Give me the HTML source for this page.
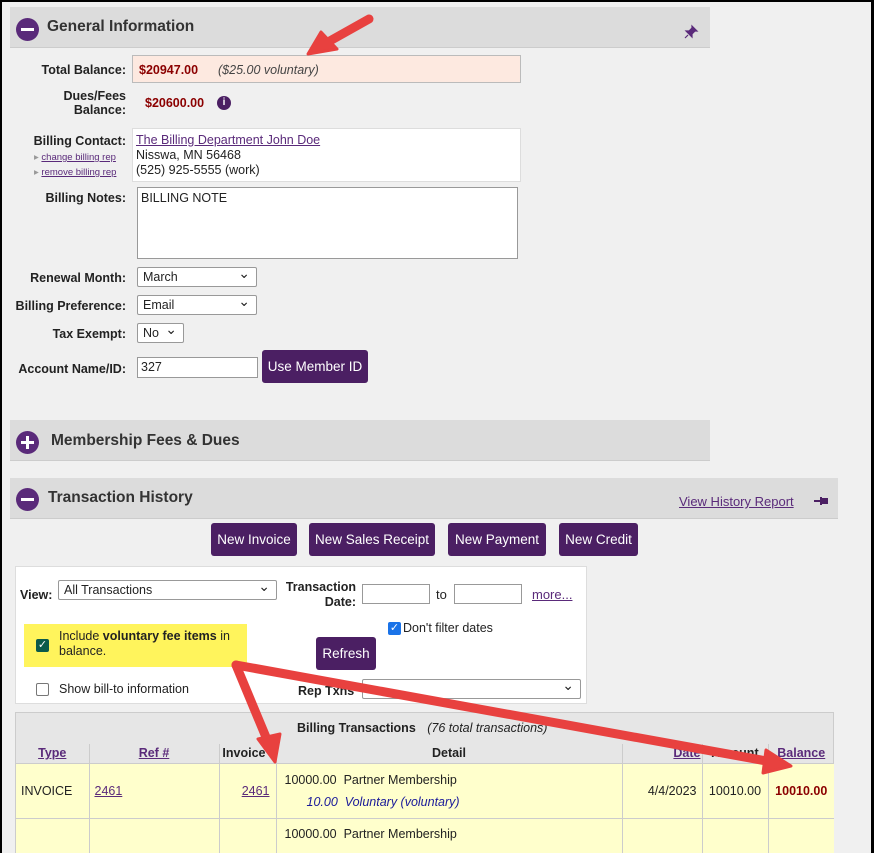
<!DOCTYPE html>
<html><head><style>
*{box-sizing:border-box}
body{margin:0;width:874px;height:853px;overflow:hidden;background:#000;font-family:"Liberation Sans",Arial,sans-serif;font-size:13px;color:#222}
#f{position:absolute;left:2px;top:2px;width:869px;height:851px;background:#f0f0f0;overflow:hidden}
.a{position:absolute}
.hd{position:absolute;background:#dcdcdc;border-bottom:1px solid #ccc}
.hd b{position:absolute;font-size:15.5px;color:#333}
.circ{position:absolute;width:23px;height:23px;border-radius:50%;background:#5a2a7a}
.circ:before{content:"";position:absolute;left:5px;top:10px;width:13px;height:3px;background:#fff}
.plus:after{content:"";position:absolute;left:10px;top:5px;width:3px;height:13px;background:#fff}
.lbl{position:absolute;font-weight:bold;text-align:right;font-size:12.5px}
.btn{position:absolute;background:#4b1f63;color:#fff;border-radius:3px;font-size:13.5px;text-align:center;line-height:33px}
.sel{position:absolute;background:#fff;border:1px solid #999;font-size:12.5px;padding:2px 5px;border-radius:2px}
.sel:after{content:"⌄";position:absolute;right:6px;top:-3px;font-size:14px}
.inp{position:absolute;background:#fff;border:1px solid #999}
a{color:#5a2a7a}
.mr{color:#8b0000;font-weight:bold}
td{font-size:12.5px}
</style></head><body><div id="f">
<div class="hd" style="left:8px;top:5px;width:700px;height:41px"><div class="circ" style="left:6px;top:11px"></div><b style="left:37px;top:11px">General Information</b>
<svg class="a" style="left:673px;top:17px" width="16" height="16" viewBox="0 0 16 16"><path d="M9 2l5 5-2 0-3 3 0 3-6-6 3 0 3-3z M5 11l-3 3" fill="#5a2a7a" stroke="#5a2a7a" stroke-width="1.2"/></svg></div>
<div class="lbl" style="left:20px;top:61px;width:104px">Total Balance:</div>
<div class="a" style="left:130px;top:53px;width:389px;height:28px;background:#fde9e0;border:1px solid #bbb"><span class="mr a" style="left:6px;top:7px;font-size:12.5px">$20947.00</span><i class="a" style="left:85px;top:7px;color:#444;font-size:12.5px">($25.00 voluntary)</i></div>
<div class="lbl" style="left:40px;top:87px;width:84px;line-height:14px">Dues/Fees<br>Balance:</div>
<div class="mr a" style="left:143px;top:94px;font-size:12.5px">$20600.00</div>
<div class="a" style="left:215px;top:94px;width:14px;height:14px;border-radius:50%;background:#4b1f63;color:#fff;font-size:10px;font-weight:bold;text-align:center;line-height:14px">i</div>
<div class="lbl" style="left:20px;top:132px;width:104px">Billing Contact:</div>
<div class="a" style="left:32px;top:148px;font-size:9.5px;line-height:15px"><span style="color:#999">▸ </span><a style="text-decoration:underline">change billing rep</a><br><span style="color:#999">▸ </span><a style="text-decoration:underline">remove billing rep</a></div>
<div class="a" style="left:130px;top:126px;width:389px;height:54px;background:#fff;border:1px solid #ddd;padding:4px 3px;font-size:12.5px;line-height:15px"><a style="text-decoration:underline">The Billing Department John Doe</a><br>Nisswa, MN 56468<br>(525) 925-5555 (work)</div>
<div class="lbl" style="left:20px;top:189px;width:104px">Billing Notes:</div>
<div class="a" style="left:135px;top:185px;width:381px;height:72px;background:#fff;border:1px solid #999;padding:3px;font-size:12.5px">BILLING NOTE</div>
<div class="lbl" style="left:10px;top:269px;width:114px">Renewal Month:</div>
<div class="sel" style="left:135px;top:265px;width:120px;height:20px">March</div>
<div class="lbl" style="left:10px;top:297px;width:114px">Billing Preference:</div>
<div class="sel" style="left:135px;top:293px;width:120px;height:20px">Email</div>
<div class="lbl" style="left:10px;top:325px;width:114px">Tax Exempt:</div>
<div class="sel" style="left:135px;top:321px;width:47px;height:20px">No</div>
<div class="lbl" style="left:10px;top:360px;width:114px">Account Name/ID:</div>
<div class="inp" style="left:135px;top:355px;width:121px;height:21px;padding:2px 3px;font-size:12.5px">327</div>
<div class="btn" style="left:260px;top:348px;width:106px">Use Member ID</div>
<div class="hd" style="left:8px;top:418px;width:700px;height:41px"><div class="circ plus" style="left:6px;top:11px"></div><b style="left:41px;top:12px">Membership Fees &amp; Dues</b></div>
<div class="hd" style="left:8px;top:476px;width:828px;height:41px"><div class="circ" style="left:6px;top:10px"></div><b style="left:38px;top:11px">Transaction History</b>
<a class="a" style="left:669px;top:16px;font-size:13px;text-decoration:underline">View History Report</a>
<svg class="a" style="left:803px;top:16px" width="16" height="14" viewBox="0 0 16 14"><path d="M1 7h7M8 3v8M8 5h6v4h-6" fill="#4b1f63" stroke="#4b1f63" stroke-width="2"/></svg></div>
<div class="btn" style="left:209px;top:521px;width:86px">New Invoice</div>
<div class="btn" style="left:307px;top:521px;width:126px">New Sales Receipt</div>
<div class="btn" style="left:446px;top:521px;width:98px">New Payment</div>
<div class="btn" style="left:557px;top:521px;width:79px">New Credit</div>
<div class="a" style="left:13px;top:564px;width:572px;height:138px;background:#fff;border:1px solid #ddd"></div>
<div class="lbl" style="left:18px;top:586px">View:</div>
<div class="sel" style="left:56px;top:578px;width:219px;height:20px">All Transactions</div>
<div class="lbl" style="left:278px;top:578px;width:76px;line-height:15px">Transaction<br>Date:</div>
<div class="inp" style="left:360px;top:582px;width:68px;height:20px"></div>
<div class="a" style="left:434px;top:585px">to</div>
<div class="inp" style="left:452px;top:582px;width:68px;height:20px"></div>
<a class="a" style="left:530px;top:585px;text-decoration:underline">more...</a>
<div class="a" style="left:386px;top:620px;width:13px;height:13px;background:#1a73e8;border-radius:2px;color:#fff;font-size:11px;line-height:13px;text-align:center">✓</div>
<div class="a" style="left:401px;top:619px;font-size:12.5px">Don't filter dates</div>
<div class="btn" style="left:314px;top:635px;width:60px">Refresh</div>
<div class="a" style="left:22px;top:622px;width:223px;height:43px;background:#fff45c"></div>
<div class="a" style="left:34px;top:637px;width:13px;height:13px;background:#0b5a4a;border-radius:2px;color:#fff;font-size:11px;line-height:13px;text-align:center">✓</div>
<div class="a" style="left:57px;top:627px;font-size:12.5px;line-height:15px">Include <b>voluntary fee items</b> in<br>balance.</div>
<div class="a" style="left:34px;top:681px;width:13px;height:13px;border:1px solid #777;border-radius:2px;background:#fff"></div>
<div class="a" style="left:57px;top:680px;font-size:12.5px">Show bill-to information</div>
<div class="lbl" style="left:296px;top:682px">Rep Txns</div>
<div class="sel" style="left:360px;top:677px;width:219px;height:20px"></div>
<div class="a" style="left:13px;top:710px;width:819px;height:145px;background:#e6e6e6;border:1px solid #ccc"></div>
<div class="a" style="left:295px;top:719px;font-weight:bold;font-size:12.5px">Billing Transactions <i style="font-weight:normal;margin-left:8px">(76 total transactions)</i></div>
<table class="a" style="left:14px;top:742px;border-collapse:collapse;width:818px">
<tr style="height:19px;font-weight:bold;text-align:center">
<td style="width:73px;border-right:1px solid #ccc"><a style="text-decoration:underline">Type</a></td>
<td style="width:130px;border-right:1px solid #ccc"><a style="text-decoration:underline">Ref #</a></td>
<td style="width:57px;border-right:1px solid #ccc;text-align:right;padding-right:10px">Invoice</td>
<td style="width:346px;border-right:1px solid #ccc">Detail</td>
<td style="width:80px;border-right:1px solid #ccc;text-align:right"><a style="text-decoration:underline">Date</a></td>
<td style="width:66px;border-right:1px solid #ccc">Amount</td>
<td><a style="text-decoration:underline">Balance</a></td></tr>
<tr style="height:55px;background:#ffffcc;border-top:1px solid #ccc">
<td style="border-right:1px solid #ccc;padding-left:5px">INVOICE</td>
<td style="border-right:1px solid #ccc;padding-left:5px"><a style="text-decoration:underline">2461</a></td>
<td style="border-right:1px solid #ccc;text-align:right;padding-right:6px"><a style="text-decoration:underline">2461</a></td>
<td style="border-right:1px solid #ccc;padding-left:8px;line-height:22px">10000.00&nbsp; Partner Membership<br><i style="color:#1a1a9a;padding-left:22px">10.00&nbsp; Voluntary (voluntary)</i></td>
<td style="border-right:1px solid #ccc;text-align:right;padding-right:5px">4/4/2023</td>
<td style="border-right:1px solid #ccc;text-align:center">10010.00</td>
<td class="mr" style="text-align:center">10010.00</td></tr>
<tr style="height:40px;background:#ffffcc;border-top:1px solid #ccc;vertical-align:top">
<td style="border-right:1px solid #ccc"></td><td style="border-right:1px solid #ccc"></td><td style="border-right:1px solid #ccc"></td>
<td style="border-right:1px solid #ccc;padding:8px 0 0 8px">10000.00&nbsp; Partner Membership</td>
<td style="border-right:1px solid #ccc"></td><td style="border-right:1px solid #ccc"></td><td></td></tr>
</table>
<svg class="a" style="left:0;top:0" width="869" height="851">
<g fill="#e8413f" stroke="#e8413f" stroke-linejoin="round">
<path d="M367 17 L326 40" stroke-width="9" stroke-linecap="round" fill="none"/>
<path d="M306 52 L319 30 L335 47 Z" stroke-width="3"/>
<path d="M234 663 L266 740" stroke-width="9" stroke-linecap="round" fill="none"/>
<path d="M273 760 L256 737 L278 732 Z" stroke-width="3"/>
<path d="M234 663 L770 760" stroke-width="9" stroke-linecap="round" fill="none"/>
<path d="M789 764 L764 748 L761 771 Z" stroke-width="3"/>
</g></svg>
</div></body></html>
